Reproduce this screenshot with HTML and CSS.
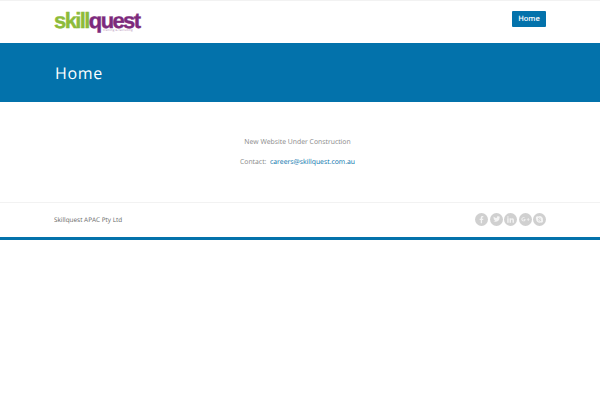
FILE: index.html
```html
<!DOCTYPE html>
<html lang="en">
<head>
    <meta charset="UTF-8">
    <meta name="viewport" content="width=device-width, initial-scale=1">
    <title>Skillquest</title>
    <link rel="stylesheet" href="styles.css">
</head>
<body>
    <header class="site-header">
        <div class="container header-row">
            <a href="#" class="logo">
                <span class="logo-name"><span class="logo-skill">skill</span><span class="logo-quest">quest</span></span>
                <span class="logo-tag">training &amp; recruiting</span>
            </a>
            <a href="#" class="nav-btn">Home</a>
        </div>
    </header>

    <div class="page-title">
        <div class="container">
            <h1>Home</h1>
        </div>
    </div>

    <main class="content">
        <p>New Website Under Construction</p>
        <p>Contact: &nbsp;<a href="#">careers@skillquest.com.au</a></p>
    </main>

    <footer class="site-footer">
        <div class="container footer-row">
            <span class="copyright">Skillquest APAC Pty Ltd</span>
            <div class="social">
                <a href="#" class="social-icon">
                    <svg viewBox="0 0 14 14"><path d="M7.600 11V7.500h1.200l.2-1.400H7.600v-.8c0-.4.1-.7.7-.7H9V3.400C8.800 3.400 8.400 3.300 8 3.300c-1.100 0-1.800.7-1.800 1.800v1H5v1.400h1.200V11z"/></svg>
                </a>
                <a href="#" class="social-icon">
                    <svg viewBox="0 0 14 14"><path d="M11 4.300c-.3.100-.6.200-.9.200.3-.2.600-.5.700-.9-.3.200-.7.300-1 .4-.6-.6-1.500-.6-2.100-.1-.4.400-.6.900-.4 1.500C6 5.300 4.800 4.700 4 3.700c-.4.700-.2 1.600.5 2.100-.3 0-.5-.1-.7-.2 0 .7.500 1.400 1.200 1.500-.2.100-.5.100-.7 0 .2.600.8 1 1.400 1-.6.500-1.400.7-2.200.6 2.800 1.700 6.800.2 6.800-3.700.3-.2.500-.4.700-.7z"/></svg>
                </a>
                <a href="#" class="social-icon">
                    <svg viewBox="0 0 14 14"><path d="M3.500 5.700h1.500V10.500H3.500zM4.250 3.400a.85.85 0 1 1 0 1.700.85.85 0 0 1 0-1.700zM6 5.700h1.400v.7c.3-.5.800-.8 1.500-.8 1.300 0 1.800.8 1.800 2.200v2.700H9.200V8c0-.7-.2-1.100-.8-1.100s-.9.500-.9 1.100v2.500H6z"/></svg>
                </a>
                <a href="#" class="social-icon">
                    <svg viewBox="0 0 14 14"><path d="M5 4.500c.6 0 1.100.2 1.400.5l-.6.600c-.2-.2-.5-.3-.8-.3-.8 0-1.400.6-1.400 1.400S4.200 8.100 5 8.100c.7 0 1.100-.4 1.200-.9H5V6.400h2c.2 1.600-.7 2.600-2 2.600-1.400 0-2.400-1-2.400-2.300S3.600 4.500 5 4.500zM9.500 5.500h.8v1.100h1.100v.8h-1.100v1.100h-.8V7.400H8.400v-.8h1.100z"/></svg>
                </a>
                <a href="#" class="social-icon">
                    <svg viewBox="0 0 14 14"><path d="M7 3.200a3.800 3.800 0 0 1 3.700 4.500c.4.800.2 1.600-.4 2.200-.5.500-1.300.6-2 .3A3.800 3.800 0 0 1 3.300 6.300c-.4-.7-.3-1.600.3-2.200.6-.5 1.400-.6 2.100-.3.400-.3.900-.6 1.300-.6zM7.100 5c-.9 0-1.700.3-1.700 1.200 0 1.500 2.400 1 2.400 1.800 0 .6-1.500.6-1.800-.3l-.8.300C5.600 9.300 8.800 9.300 8.800 7.900c0-1.600-2.400-1.100-2.400-1.800 0-.5 1.200-.5 1.500.2l.8-.3C8.400 5.300 7.800 5 7.100 5z"/></svg>
                </a>
            </div>
        </div>
    </footer>
</body>
</html>
```

FILE: styles.css
```css
* {
    box-sizing: border-box;
    margin: 0;
    padding: 0;
}

body {
    font-family: 'Open Sans', sans-serif;
    background: #fff;
    color: #888;
    font-size: 7px;
    text-rendering: geometricPrecision;
}

a {
    text-decoration: none;
}

.container {
    width: 492px;
    margin: 0 auto;
}

.site-header {
    height: 43px;
    background: #fff;
    border-top: 1px solid #f2f2f2;
}

.header-row {
    display: flex;
    justify-content: space-between;
    align-items: flex-start;
}

.logo {
    display: block;
    position: relative;
    height: 32px;
    margin-top: 8px;
}

.logo-name {
    display: block;
    font-family: 'Liberation Sans', sans-serif;
    font-size: 22px;
    font-weight: 700;
    line-height: 24px;
    letter-spacing: -1.6px;
    white-space: nowrap;
    -webkit-text-stroke: 0.4px;
}

.logo-skill {
    color: #8dbb3a;
}

.logo-quest {
    color: #7d2a7c;
}

.logo-tag {
    position: absolute;
    left: 49px;
    top: 20px;
    font-size: 3.200px;
    line-height: 3px;
    color: #b79abb;
    white-space: nowrap;
}

.nav-btn {
    display: block;
    width: 34px;
    height: 16px;
    margin-top: 10px;
    background: #0372ab;
    border-radius: 1px;
    color: #fff;
    font-size: 7.500px;
    font-weight: 600;
    line-height: 16px;
    text-align: center;
}

.page-title {
    height: 59px;
    background: #0372ab;
    padding-top: 18px;
}

.page-title h1 {
    padding-left: 1px;
    color: #fff;
    font-size: 16px;
    font-weight: 400;
    line-height: 24px;
    letter-spacing: 0.7px;
}

.content {
    height: 100px;
    padding: 34px 5px 0 0;
    text-align: center;
    font-size: 6.850px;
    line-height: 13px;
    opacity: 0.99;
}

.content p {
    margin-bottom: 6.500px;
}

.content a {
    color: #0372ab;
}

.site-footer {
    height: 38px;
    background: #fff;
    border-top: 1px solid #f2f2f2;
    border-bottom: 3px solid #0372ab;
}

.footer-row {
    display: flex;
    justify-content: space-between;
    align-items: center;
    height: 33px;
}

.copyright {
    color: #666;
    font-size: 6.400px;
    opacity: 0.99;
}

.social {
    display: flex;
    gap: 1.500px;
}

.social-icon {
    display: block;
    width: 13px;
    height: 13px;
    border-radius: 50%;
    background: #d0d0d0;
}

.social-icon svg {
    display: block;
    width: 13px;
    height: 13px;
    fill: #f4f4f4;
}
```
